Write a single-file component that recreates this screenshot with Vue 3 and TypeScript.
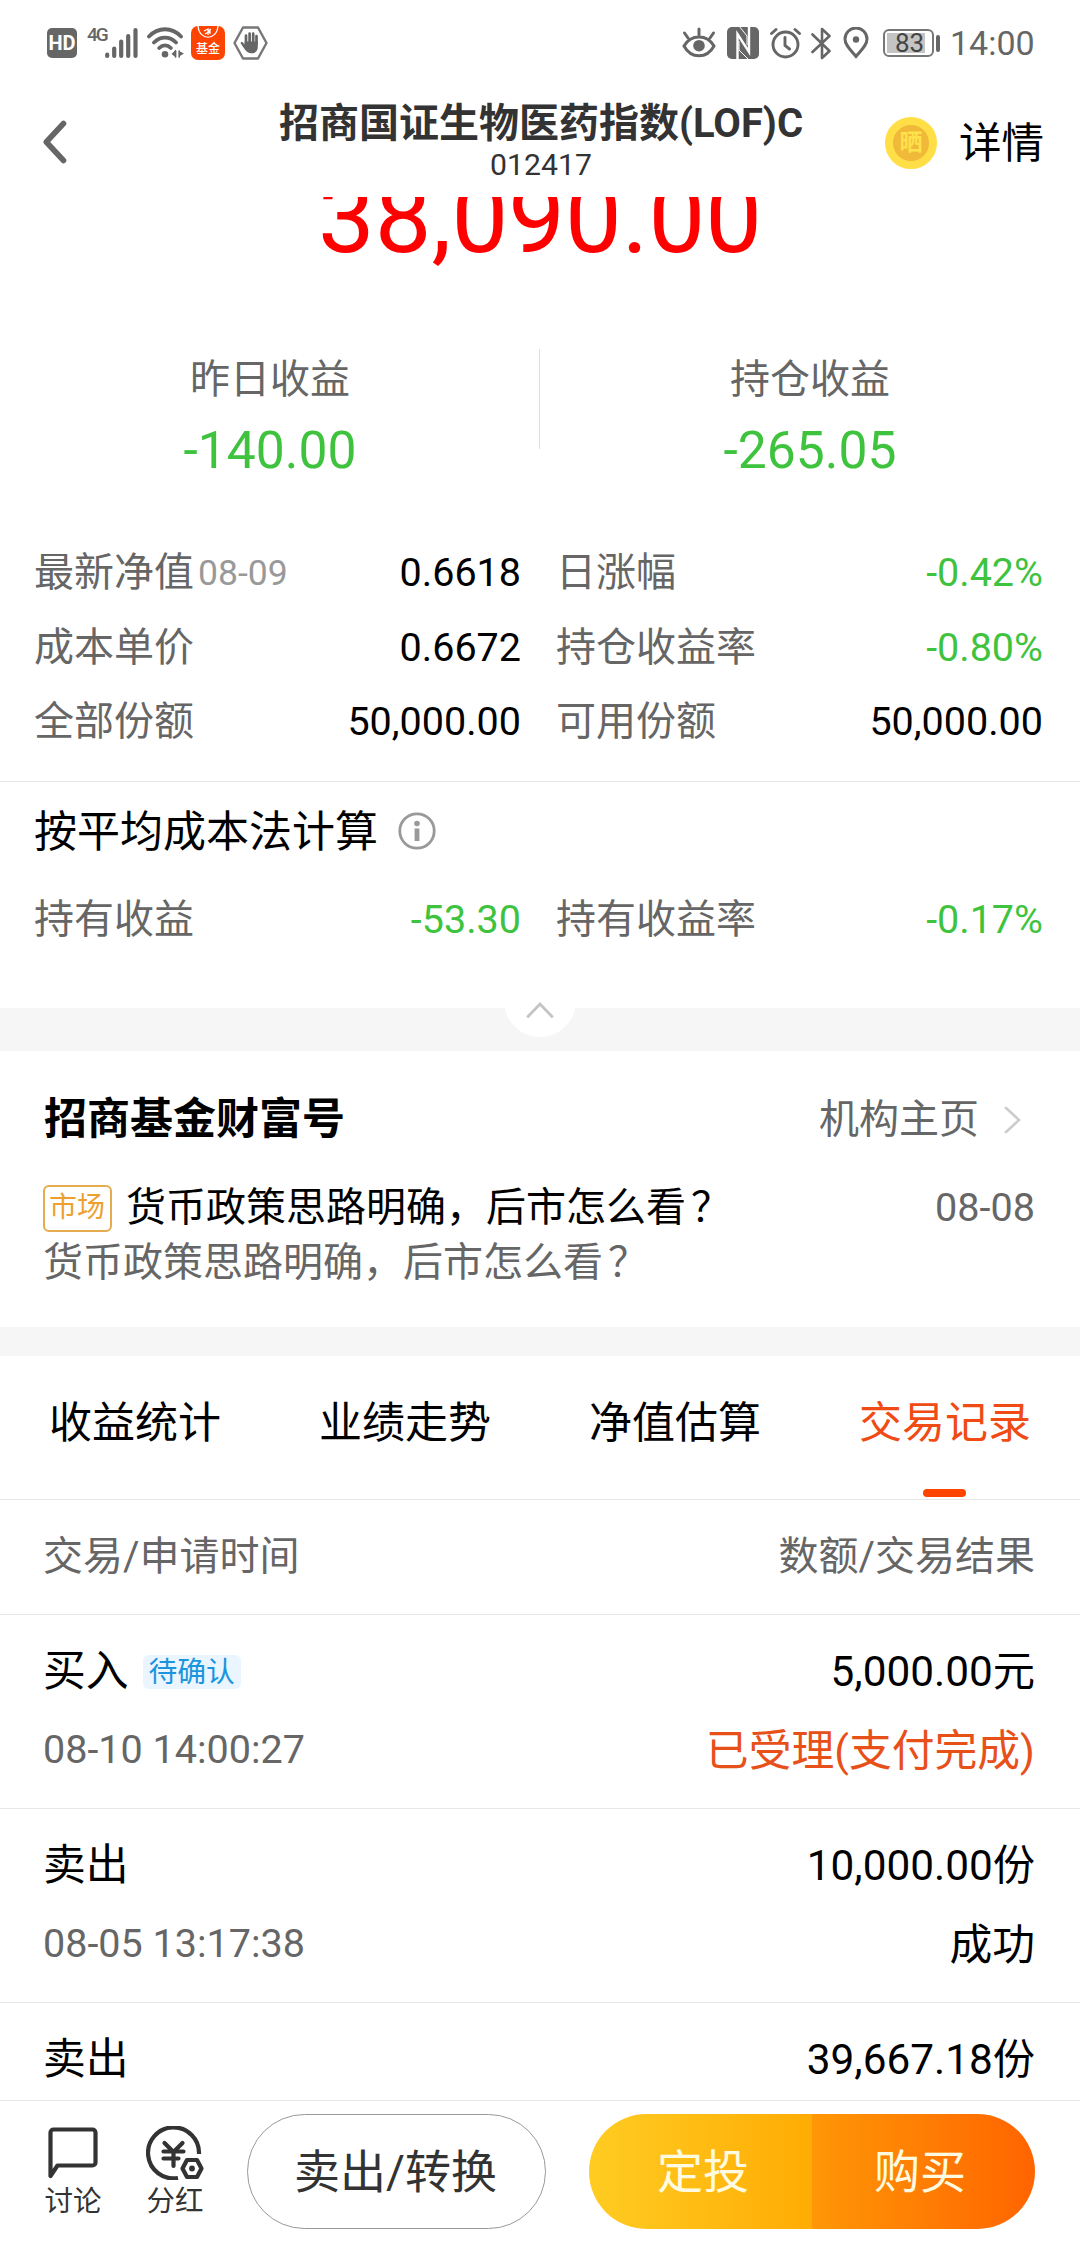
<script setup lang="ts">
interface Cell { label: string; note?: string; value: string; down?: boolean }
interface Trade { kind: string; badge?: string; amount: string; time: string; result: string; pending?: boolean }

const summary = [
  { label: '昨日收益', value: '-140.00' },
  { label: '持仓收益', value: '-265.05' },
]

const details: Cell[] = [
  { label: '最新净值', note: '08-09', value: '0.6618' },
  { label: '日涨幅', value: '-0.42%', down: true },
  { label: '成本单价', value: '0.6672' },
  { label: '持仓收益率', value: '-0.80%', down: true },
  { label: '全部份额', value: '50,000.00' },
  { label: '可用份额', value: '50,000.00' },
]

const average: Cell[] = [
  { label: '持有收益', value: '-53.30', down: true },
  { label: '持有收益率', value: '-0.17%', down: true },
]

const tabs = ['收益统计', '业绩走势', '净值估算', '交易记录']
const activeTab = '交易记录'

const trades: Trade[] = [
  { kind: '买入', badge: '待确认', amount: '5,000.00元', time: '08-10 14:00:27', result: '已受理(支付完成)', pending: true },
  { kind: '卖出', amount: '10,000.00份', time: '08-05 13:17:38', result: '成功' },
  { kind: '卖出', amount: '39,667.18份', time: '', result: '' },
]
</script>

<template>
  <div class="screen">
    <div class="status">
      <div class="status-left">
        <span class="hd">HD</span>
        <span class="net">4G</span>
        <svg class="signal" width="33" height="32" viewBox="0 0 33 32" stroke="#666" stroke-width="4.2" stroke-linecap="round">
          <path d="M2.2 27.5v1.4M9.2 21.5v7.4M16.2 14.5v14.4M23.2 9v19.9M30.5 3v25.9" />
        </svg>
        <svg class="wifi" width="38" height="32" viewBox="0 0 38 32" fill="none" stroke="#666" stroke-width="3.8" stroke-linecap="round">
          <path d="M2 9.5C11-.2 25-.2 34 9.5M7 15.5c6.500-6.500 15.500-6.500 22 0M12.200 21c3.500-3.500 8.200-3.500 11.600 0" />
          <circle cx="18" cy="27.200" r="3.300" fill="#666" stroke="none" />
          <path d="M29 22.500v8l-4.500-3.500zM32 24l5 2.500-5 3z" fill="#666" stroke="none" />
          <path d="M28.600 24v6M32.200 24v6" stroke-width="1.600" />
        </svg>
        <span class="fund">
          <svg width="34" height="16" viewBox="0 0 34 16" fill="none" stroke="#fff" stroke-width="1.200">
            <path d="M7 0c1 15 19 15 20 0M13 5l4-2v6M17 5l3-2M14 8l5-3M19 4v4" />
          </svg>
          <span class="fund-text">基金</span>
        </span>
        <svg class="hand" width="35" height="34" viewBox="0 0 35 34">
          <path d="M10 1.500h15L33.500 17 25 32.500H10L1.500 17z" fill="none" stroke="#777" stroke-width="2.400" stroke-linejoin="round" />
          <path d="M13 18V9.500M16.600 17V7.500M20.200 17V7.500M23.500 18v-8" stroke="#666" stroke-width="2.700" stroke-linecap="round" />
          <path d="M11.700 15.500h13.100V21c0 4-2.500 6.300-6.300 6.300-3.500 0-5.200-1.800-7-4.300L7.800 17.500c-.6-1.400 1.200-2.100 2.100-1.100l1.800 2z" fill="#666" />
        </svg>
      </div>
      <div class="status-right">
        <svg class="eye" width="34" height="32" viewBox="0 0 34 32" fill="none" stroke="#666" stroke-width="3" stroke-linecap="round">
          <path d="M2 19c7-12 23-12 30 0-7 13-23 13-30 0zM17 2v6M2.500 6l3.500 5M31.500 6 28 11" />
          <circle cx="17" cy="18.700" r="5.800" fill="#666" stroke="none" />
        </svg>
        <svg class="nfc" width="32" height="32" viewBox="0 0 32 32">
          <rect width="32" height="32" rx="5" fill="#666" />
          <path d="M7 0 20.500 21V8l3 2V0zM11.500 11v13L25 32H8.500V9z" fill="#fff" opacity="0" />
          <path d="M10.500 34V7L22 25V-2" fill="none" stroke="#fff" stroke-width="2.400" />
          <path d="M12 14v9l9 9M20 18V9L12-1" fill="none" stroke="#fff" stroke-width="1" />
        </svg>
        <svg class="alarm" width="31" height="32" viewBox="0 0 31 32" fill="none" stroke="#666" stroke-width="2.900" stroke-linecap="round">
          <circle cx="15.500" cy="17.500" r="12.500" />
          <path d="M15 10.500v8l4.500 3.500M1.500 6.500l4.500-4M29.500 6.500l-4.500-4" />
        </svg>
        <svg class="bt" width="21" height="33" viewBox="0 0 21 33" fill="none" stroke="#666" stroke-width="2.600">
          <path d="M1.500 7.500 18.500 24l-7.500 7V2l7.500 7L1.500 25" stroke-linejoin="round" stroke-linecap="round" />
        </svg>
        <svg class="pin" width="26" height="32" viewBox="0 0 26 32">
          <path d="M13 29.500C7 22.500 2 18 2 12a11 11 0 0 1 22 0c0 6-5 10.500-11 17.500z" fill="none" stroke="#666" stroke-width="3" />
          <circle cx="13" cy="12.500" r="3.200" fill="#666" />
        </svg>
        <span class="battery"><span class="charge" /><span class="percent">83</span></span>
        <span class="nub" />
        <span class="clock">14:00</span>
      </div>
    </div>

    <header class="head">
      <svg class="back" width="24" height="44" viewBox="0 0 24 44" fill="none" stroke="#666" stroke-width="5.600" stroke-linecap="round" stroke-linejoin="round">
        <path d="M20.500 3.500 3.300 22l17.200 18.500" />
      </svg>
      <div class="names">
        <div class="name">招商国证生物医药指数(LOF)C</div>
        <div class="code">012417</div>
      </div>
      <div class="actions">
        <span class="coin"><span>晒</span></span>
        <span class="more">详情</span>
      </div>
    </header>

    <main class="scroller">
      <div class="amount">38,090.00</div>

      <section class="summary">
        <div v-for="s in summary" :key="s.label" class="sum">
          <div class="sum-label">{{ s.label }}</div>
          <div class="sum-value">{{ s.value }}</div>
        </div>
      </section>

      <section class="details">
        <div v-for="c in details" :key="c.label" class="cell">
          <span class="label">{{ c.label }}</span>
          <span v-if="c.note" class="note">{{ c.note }}</span>
          <span class="value" :class="{ down: c.down }">{{ c.value }}</span>
        </div>
      </section>

      <section class="average">
        <div class="avg-title">
          <span>按平均成本法计算</span>
          <svg width="38" height="38" viewBox="0 0 38 38">
            <circle cx="19" cy="19" r="17.200" fill="none" stroke="#999" stroke-width="2.800" />
            <circle cx="19" cy="11.500" r="2.800" fill="#999" />
            <path d="M19 16.500v12.500" stroke="#999" stroke-width="4.800" />
          </svg>
        </div>
        <div class="pair">
          <div v-for="c in average" :key="c.label" class="cell">
            <span class="label">{{ c.label }}</span>
            <span class="value" :class="{ down: c.down }">{{ c.value }}</span>
          </div>
        </div>
      </section>

      <div class="band fold">
        <span class="knob">
          <svg width="28" height="18" viewBox="0 0 28 18" fill="none" stroke="#c4c4c4" stroke-width="2.800" stroke-linecap="round">
            <path d="M2 15.500 14 3l12 12.500" />
          </svg>
        </span>
      </div>

      <section class="wealth">
        <div class="wealth-head">
          <span class="wealth-name">招商基金财富号</span>
          <span class="wealth-link">机构主页
            <svg width="17" height="28" viewBox="0 0 17 28" fill="none" stroke="#ccc" stroke-width="2.600" stroke-linecap="round">
              <path d="M2 2l13 12L2 26" />
            </svg>
          </span>
        </div>
        <div class="article">
          <span class="tag">市场</span>
          <span class="article-title">货币政策思路明确，后市怎么看<span class="mark">？</span></span>
          <span class="article-date">08-08</span>
        </div>
        <div class="article-text">货币政策思路明确，后市怎么看<span class="mark">？</span></div>
      </section>

      <div class="band thin" />

      <nav class="tabs">
        <div v-for="t in tabs" :key="t" class="tab" :class="{ active: t === activeTab }">{{ t }}</div>
      </nav>

      <div class="list-head">
        <span>交易/申请时间</span>
        <span>数额/交易结果</span>
      </div>

      <div v-for="(t, i) in trades" :key="i" class="trade">
        <div class="line">
          <span class="kind">{{ t.kind }}</span>
          <span v-if="t.badge" class="badge">{{ t.badge }}</span>
          <span class="sum-right">{{ t.amount }}</span>
        </div>
        <div class="line second">
          <span class="time">{{ t.time }}</span>
          <span class="result" :class="{ pending: t.pending }">{{ t.result }}</span>
        </div>
      </div>
    </main>

    <footer class="foot">
      <div class="tool">
        <svg width="50" height="54" viewBox="0 0 50 54" fill="none" stroke="#333" stroke-width="4.200" stroke-linejoin="round">
          <path d="M5.500 3.500h39a3 3 0 0 1 3 3v30a3 3 0 0 1-3 3H9.500L2.500 50V6.500a3 3 0 0 1 3-3z" />
        </svg>
        <span>讨论</span>
      </div>
      <div class="tool">
        <svg width="58" height="54" viewBox="0 0 58 54" fill="none" stroke="#333" stroke-width="4.200" stroke-linecap="round" stroke-linejoin="round">
          <path d="M53 28A25.500 25.500 0 1 0 32 52" stroke-linecap="butt" />
          <path d="M18.500 17 27.500 26l9-9M17.500 25.500h20M17.500 32.500h15M27.500 26v14" />
          <path d="M36.500 42.500 41 34h10l4.500 8.500L51 51H41z" />
          <circle cx="46" cy="42.500" r="2.900" fill="#333" stroke="none" />
        </svg>
        <span>分红</span>
      </div>
      <button class="sell">卖出/转换</button>
      <div class="buy-group">
        <button class="plan">定投</button>
        <button class="buy">购买</button>
      </div>
    </footer>
  </div>
</template>

<style>
body { margin: 0; background: #fff; }
</style>

<style scoped>
.screen {
  width: 1080px;
  height: 2244px;
  display: flex;
  flex-direction: column;
  overflow: hidden;
  background: #fff;
  color: #000;
  font-family: Roboto, "Noto Sans CJK SC", sans-serif;
  font-size: 40px;
  line-height: 1.2;
  white-space: nowrap;
}
svg { display: block; flex: none; }

.status { height: 86px; flex: none; display: flex; justify-content: space-between; padding: 0 47px; color: #666; }
.status-left, .status-right { display: flex; align-items: center; }
.hd { width: 30px; height: 30px; border-radius: 5px; background: #666; color: #fff; font-weight: 700; font-size: 20px; line-height: 31px; text-align: center; }
.net { margin: -17px 0 0 10px; width: 18px; font-size: 19px; font-weight: 500; line-height: 18px; letter-spacing: -2px; }
.wifi { margin-left: 9px; }
.fund { margin-left: 6px; width: 34px; height: 34px; border-radius: 7px; background: #ff4400; overflow: hidden; color: #fff; }
.fund-text { display: block; font-size: 12px; line-height: 14px; text-align: center; font-weight: 500; }
.hand { margin-left: 8px; }
.nfc { margin-left: 11px; }
.alarm { margin-left: 11px; }
.bt { margin-left: 10px; }
.pin { margin-left: 11px; }
.battery { position: relative; box-sizing: border-box; margin-left: 14px; width: 51px; height: 28px; border: 2px solid #777; border-radius: 6px; display: flex; align-items: center; }
.charge { margin-left: 2px; width: 38px; height: 20px; background: #c4c4c4; }
.percent { position: absolute; left: 10px; top: 0; font-size: 26px; line-height: 24px; color: #444; }
.nub { margin-left: 2px; width: 4px; height: 17px; border-radius: 2px; background: #666; }
.clock { margin-left: 10px; width: 83px; font-size: 34px; line-height: 40px; }

.head { height: 111px; flex: none; display: grid; grid-template-columns: 1fr auto 1fr; }
.back { margin: 34px 0 0 43px; }
.names { text-align: center; color: #333; padding-left: 2px; }
.name { margin-top: 13px; font-size: 40px; font-weight: 700; line-height: 50px; }
.code { font-size: 30.200px; line-height: 32px; }
.actions { display: flex; justify-content: flex-end; align-items: center; height: 115px; padding-right: 36px; }
.coin { box-sizing: border-box; width: 52px; height: 52px; border: 8px solid #ffdf45; border-radius: 50%; background: #f0b93a; color: #ffe14a; font-size: 23px; font-weight: 700; line-height: 36px; display: flex; justify-content: center; margin-top: -2px; }
.more { margin-left: 22px; font-size: 42.500px; line-height: 60px; }

.scroller { height: 1903px; flex: none; overflow: hidden; }
.amount { margin-top: -31px; height: 101px; font-size: 101px; line-height: 104px; color: #f00; text-align: center; }
.summary { margin-top: 82px; height: 131px; display: flex; }
.sum { flex: 1; text-align: center; }
.sum:first-child { background: linear-gradient(#ddd, #ddd) right top / 1px 100px no-repeat; }
.sum-label { margin-top: 3px; line-height: 56px; color: #666; }
.sum-value { margin-top: 13px; font-size: 51.600px; line-height: 60px; color: #3fc33f; }

.details { margin-top: 56px; padding: 0 37px 21.500px 34px; display: grid; grid-template-columns: 487px 487px; justify-content: space-between; border-bottom: 1px solid #e6e6e6; }
.pair { display: grid; grid-template-columns: 487px 487px; justify-content: space-between; }
.cell { height: 74.500px; display: flex; align-items: center; line-height: 74px; }
.label { color: #666; }
.note { margin-left: 4px; font-size: 35.500px; color: #999; }
.value { margin-left: auto; font-size: 39.500px; }
.down { color: #3fc33f; }

.average { height: 206px; padding: 20px 37px 0 34px; }
.avg-title { height: 62px; display: flex; align-items: center; gap: 20px; font-size: 43px; }
.avg-title svg { margin-top: -4px; }
.average .pair { margin-top: 19px; }

.band { background: #f6f6f6; }
.fold { height: 43px; display: flex; justify-content: center; align-items: flex-start; }
.knob { margin-top: -43px; width: 72px; height: 72px; border-radius: 50%; background: #fff; display: flex; justify-content: center; align-items: flex-start; }
.knob svg { margin-top: 36px; }
.thin { height: 29px; }

.wealth { height: 237px; padding: 39px 45px 0 44px; }
.wealth-head { height: 60px; display: flex; align-items: center; justify-content: space-between; }
.wealth-name { font-size: 43px; font-weight: 700; }
.wealth-link { display: flex; align-items: center; color: #666; padding-right: 14px; }
.wealth-link svg { margin-left: 25px; }
.article { margin-top: 34px; height: 48px; display: flex; align-items: center; }
.tag { box-sizing: border-box; width: 69px; height: 47px; margin-left: -1px; padding-right: 1px; border: 2px solid #e5ab4f; border-radius: 6px; color: #eda030; font-size: 28px; line-height: 42px; text-align: center; }
.article-title { margin-left: 14px; }
.article-date { margin-left: auto; color: #666; font-size: 39.600px; }
.article-text { margin-top: 7px; margin-left: -1px; line-height: 48px; color: #666; }
.mark { padding-left: 5px; }

.tabs { height: 143px; display: flex; border-bottom: 1px solid #e6e6e6; }
.tab { position: relative; flex: 1; text-align: center; font-size: 43px; line-height: 135px; }
.active { color: #f04b14; }
.active::after { content: ""; position: absolute; left: 113px; bottom: 2px; width: 43px; height: 8px; border-radius: 4px; background: #ff4400; }

.list-head { height: 114px; padding: 0 45px 0 43px; display: flex; align-items: center; justify-content: space-between; color: #666; border-bottom: 1px solid #e6e6e6; }
.trade { box-sizing: border-box; height: 194px; padding: 27px 45px 0 43px; border-bottom: 1px solid #e6e6e6; }
.line { height: 60px; display: flex; align-items: center; font-size: 42.800px; }
.badge { margin-left: 14px; width: 98px; height: 34px; border-radius: 6px; background: #eaf5ff; color: #1b95dd; font-size: 28.800px; line-height: 34px; text-align: center; }
.sum-right, .result { margin-left: auto; }
.sum-right { font-size: 42.300px; }
.second { margin-top: 18px; }
.time { color: #666; font-size: 39.500px; }
.result { padding-top: 3px; }
.pending { color: #e8501a; }

.foot { height: 143px; flex: none; border-top: 1px solid #e6e6e6; display: flex; padding-left: 44px; }
.tool { width: 58px; padding-top: 25px; display: flex; flex-direction: column; align-items: center; color: #333; font-size: 28.500px; line-height: 36px; }
.tool + .tool { margin-left: 44px; }
.tool span { margin-top: 4px; }
button { font-family: inherit; font-size: 46px; padding: 0; margin: 0; border: 0; line-height: 114px; }
.sell { box-sizing: border-box; margin: 13px 0 0 43px; width: 299px; height: 115px; padding-right: 2px; border: 1.500px solid #999; border-radius: 58px; background: #fff; color: #333; }
.buy-group { margin: 13px 0 0 43px; width: 446px; height: 115px; display: flex; border-radius: 58px; overflow: hidden; }
.plan, .buy { box-sizing: border-box; width: 223px; color: #fffbe0; }
.plan { padding-left: 5px; background: linear-gradient(90deg, #ffcc22, #ffac04); }
.buy { padding-right: 7px; background: linear-gradient(90deg, #ff9706, #ff6400); }
</style>
